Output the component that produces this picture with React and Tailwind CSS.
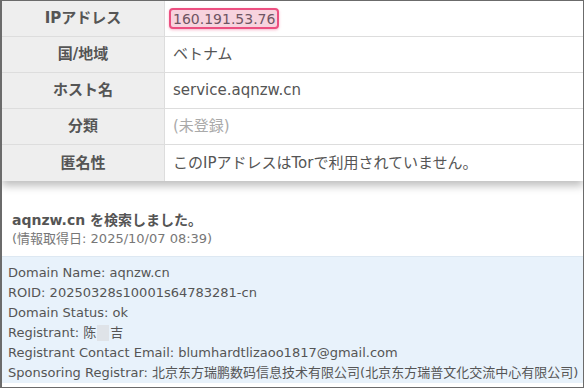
import React from "react";

const rows = [
  { label: "IPアドレス", value: "160.191.53.76", ip: true },
  { label: "国/地域", value: "ベトナム" },
  { label: "ホスト名", value: "service.aqnzw.cn" },
  { label: "分類", value: "(未登録)", muted: true },
  { label: "匿名性", value: "このIPアドレスはTorで利用されていません。" },
];

const whois = [
  "Domain Name: aqnzw.cn",
  "ROID: 20250328s10001s64783281-cn",
  "Domain Status: ok",
  null,
  "Registrant Contact Email: blumhardtlizaoo1817@gmail.com",
  "Sponsoring Registrar: 北京东方瑞鹏数码信息技术有限公司(北京东方瑞普文化交流中心有限公司)",
];

const font = { fontFamily: '"DejaVu Sans", "Noto Sans CJK JP", sans-serif' };

export default function App() {
  return (
    <div
      className="w-[584px] h-[388px] overflow-hidden bg-white border border-l-2 border-[#6b6b6b] text-[#555]"
      style={font}
    >
      <div className="shadow-[0_5px_8px_rgba(0,0,0,0.25)]">
        {rows.map((r, i) => (
          <div
            key={r.label}
            className={`flex h-[36px] ${i < rows.length - 1 ? "border-b border-[#ddd]" : ""}`}
          >
            <div className="w-[163px] shrink-0 bg-[#eeeeee] border-r border-[#ddd] flex items-center justify-center font-bold text-[15px] text-[#555]">
              {r.label}
            </div>
            <div className="flex items-center pl-[4px] text-[15px]">
              {r.ip ? (
                <span className="px-[2px] h-[21px] leading-[19px] text-[14px] rounded-[4px] border-2 border-[#ec4f80] bg-[#f7d3de] text-[#6e5563] shadow-[0_1px_3px_rgba(236,79,128,0.4)]">
                  {r.value}
                </span>
              ) : (
                <span className={`pl-[4px] ${r.muted ? "text-[#aaa]" : "text-[#555]"}`}>{r.value}</span>
              )}
            </div>
          </div>
        ))}
      </div>

      <div className="pt-[29px] pb-[8px] pl-[10px]">
        <div className="text-[14px] font-bold leading-[20px] text-[#555]">aqnzw.cn を検索しました。</div>
        <div className="text-[13px] leading-[18px] text-[#777]">(情報取得日: 2025/10/07 08:39)</div>
      </div>

      <div className="bg-[#e8f2fb] border-t border-[#dde8f2] pt-[6px] pl-[6px] text-[13px] leading-[20px] text-[#555] whitespace-nowrap">
        {whois.map((line, i) =>
          line === null ? (
            <div key={i} className="flex items-center">
              Registrant: 陈<span className="inline-block w-[12px] h-[16px] bg-[#dfe3e8] mx-[1px]"></span>吉
            </div>
          ) : (
            <div key={i}>{line}</div>
          )
        )}
      </div>
    </div>
  );
}
